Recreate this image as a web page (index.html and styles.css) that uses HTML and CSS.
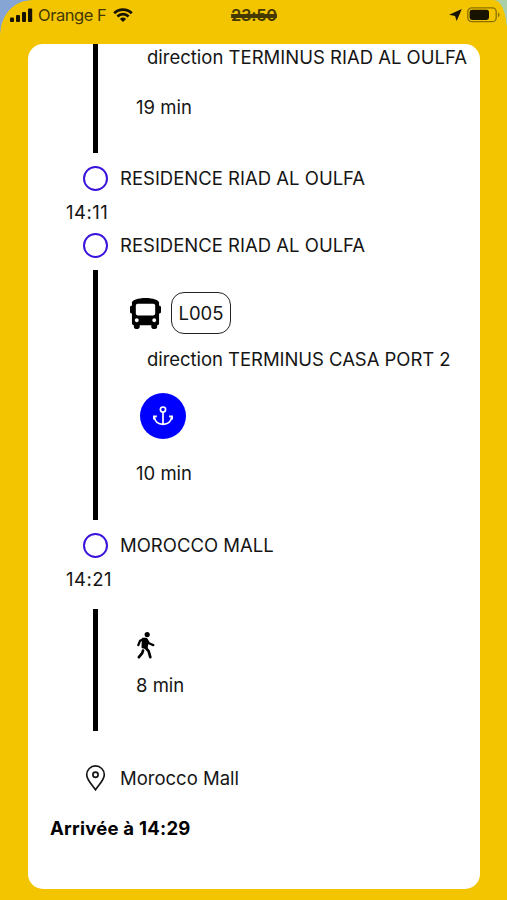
FILE: index.html
```
<!DOCTYPE html>
<html lang="fr">
<head>
  <meta charset="UTF-8">
  <meta name="viewport" content="width=device-width, initial-scale=1.0">
  <title>Itinéraire</title>
  <link rel="stylesheet" href="styles.css">
</head>
<body>
  <div class="screen">
    <header class="status-bar">
      <div class="status-left">
        <svg class="signal" width="23" height="15" viewBox="0 0 23 15">
          <rect x="0" y="9.5" width="4" height="4.5" rx="1"/>
          <rect x="6" y="7" width="4" height="7" rx="1"/>
          <rect x="12" y="4" width="4" height="10" rx="1"/>
          <rect x="18" y="0.5" width="4.2" height="13.5" rx="1"/>
        </svg>
        <span class="carrier">Orange F</span>
        <svg class="wifi" width="20" height="14" viewBox="0 0 20 14">
          <path d="M1.2 5.2a12.6 12.6 0 0 1 17.6 0M4.4 8.5a8 8 0 0 1 11.2 0" fill="none" stroke="#171300" stroke-width="2.8"/>
          <path d="M10 14l-3.1-3.1a4.5 4.5 0 0 1 6.2 0z"/>
        </svg>
      </div>
      <span class="clock">23:50</span>
      <div class="status-right">
        <svg width="13" height="12" viewBox="0 0 13 12"><path d="M12.800.1L7.700 12 6 6.900.1 5.800z"/></svg>
        <svg width="34" height="16" viewBox="0 0 34 16">
          <rect x=".8" y=".9" width="28.400" height="13.800" rx="4" fill="none" stroke="#8a7000" stroke-width="1.3"/>
          <rect x="2.600" y="2.700" width="19.400" height="10.200" rx="2.400"/>
          <path d="M31 5.500v4.600c2-.8 2-3.800 0-4.600z" fill="#8a7000"/>
        </svg>
      </div>
    </header>

    <main class="card">
      <section class="leg leg-first">
        <p class="direction">direction TERMINUS RIAD AL OULFA</p>
        <p class="duration">19 min</p>
      </section>

      <div class="stop"><span class="dot"></span><span class="stop-name">RESIDENCE RIAD AL OULFA</span></div>
      <p class="time">14:11</p>
      <div class="stop"><span class="dot"></span><span class="stop-name">RESIDENCE RIAD AL OULFA</span></div>

      <section class="leg leg-bus">
        <div class="line-info">
          <svg class="bus" width="31" height="31" viewBox="0 0 512 512">
            <path d="M488 128h-8V80c0-44.800-99.200-80-224-80S32 35.200 32 80v48h-8c-13.250 0-24 10.740-24 24v80c0 13.250 10.750 24 24 24h8v160c0 17.670 14.330 32 32 32v32c0 17.670 14.330 32 32 32h32c17.670 0 32-14.330 32-32v-32h192v32c0 17.670 14.330 32 32 32h32c17.670 0 32-14.330 32-32v-32h6.400c16 0 25.600-12.800 25.600-25.600V256h8c13.250 0 24-10.750 24-24v-80c0-13.260-10.750-24-24-24zM112 400c-17.670 0-32-14.330-32-32s14.330-32 32-32 32 14.330 32 32-14.330 32-32 32zm16-112c-17.670 0-32-14.330-32-32V128c0-17.670 14.330-32 32-32h256c17.670 0 32 14.330 32 32v128c0 17.670-14.330 32-32 32H128zm272 112c-17.670 0-32-14.330-32-32s14.330-32 32-32 32 14.330 32 32-14.330 32-32 32z"/>
          </svg>
          <span class="badge">L005</span>
        </div>
        <p class="direction">direction TERMINUS CASA PORT 2</p>
        <div class="anchor">
          <svg width="20" height="20" viewBox="0 0 20 20">
            <circle cx="10" cy="3.600" r="2.600"/>
            <path d="M10 6.200v12.200M.9 13.400V10.300h3M19.100 13.400V10.300h-3M1.200 10.700c.7 4.800 4.100 7.600 8.800 7.600s8.100-2.800 8.800-7.600"/>
          </svg>
        </div>
        <p class="duration">10 min</p>
      </section>

      <div class="stop"><span class="dot"></span><span class="stop-name">MOROCCO MALL</span></div>
      <p class="time">14:21</p>

      <section class="leg leg-walk">
        <svg class="walk" width="18" height="27" viewBox="0 0 18 27">
          <circle cx="10.200" cy="2.600" r="2.600"/>
          <path d="M5.600 6.600h3.600l1.600 3.200-.9 6.400-4.600-.7z" stroke-width="1.500"/>
          <path d="M6.500 7.200L3 8.800l-1.700 4.300M9.700 7.500l2.200 3.800 4.400 1.800" fill="none" stroke-width="2.300"/>
          <path d="M8 15l3.600 4.200 1.700 6M6 18.600l-.8 2.600-3.300 4" fill="none" stroke-width="2.700"/>
        </svg>
        <p class="duration">8 min</p>
      </section>

      <div class="stop arrival-stop">
        <svg class="pin" width="25" height="26" viewBox="0 0 25 26">
          <path d="M12.500 24.800C9.500 20.200 3.700 14.800 3.700 9.700a8.800 8.800 0 0 1 17.600 0c0 5.100-5.800 10.500-8.800 15.100z"/>
          <circle cx="12.500" cy="9.700" r="2.600"/>
        </svg>
        <span>Morocco Mall</span>
      </div>
      <p class="arrival">Arrivée à 14:29</p>
    </main>
  </div>
</body>
</html>
```
FILE: styles.css
```
* {
  box-sizing: border-box;
}
body {
  margin: 0;
  font-family: Inter, "Liberation Sans", sans-serif;
  font-size: 18.5px;
  color: #151515;
}
p {
  margin: 0;
  white-space: nowrap;
}
svg {
  display: block;
  flex-shrink: 0;
}
.screen {
  width: 507px;
  height: 900px;
  padding: 0 27px 11px 28px;
  display: flex;
  flex-direction: column;
  overflow: hidden;
  /* the map shows behind the rounded top corners */
  background:
    radial-gradient(ellipse 31px 34px at 31px 34px, #f2c500 98%, transparent 100%) 0 0 / 31px 34px no-repeat,
    radial-gradient(ellipse 12px 32px at 0 32px, #f2c500 97%, transparent 100%) 100% 0 / 12px 32px no-repeat,
    linear-gradient(#86a4d4, #86a4d4) 0 0 / 31px 34px no-repeat,
    linear-gradient(#a9cfa9, #a9cfa9) 100% 0 / 12px 32px no-repeat,
    #f2c500;
}

/* Status bar */
.status-bar {
  display: grid;
  grid-template-columns: 1fr auto 1fr;
  align-items: center;
  height: 30px;
  margin: 0 -21px 14px -18px;
  fill: #171300;
}
.status-left, .status-right {
  display: flex;
  align-items: center;
}
.carrier {
  margin: 0 7px 0 5px;
  font-size: 16.5px;
  letter-spacing: -0.45px;
  color: #453900;
}
.clock {
  margin-left: -3px;
  font-size: 16.5px;
  font-weight: 600;
  letter-spacing: -0.3px;
  color: #453900;
  text-decoration: line-through;
  text-decoration-color: #453900;
  text-decoration-thickness: 4px;
}
.status-right {
  justify-content: flex-end;
  gap: 5px;
}

/* Itinerary */
.card {
  flex: 1;
  background: #fff;
  border-radius: 15px;
  overflow: hidden;
}
.leg {
  margin-left: 65px;
  border-left: 5px solid #000;
}
.leg-first {
  height: 109px;
  margin-bottom: 9px;
  padding-top: 1px;
}
.leg-first .duration {
  margin-top: 26px;
}
.direction {
  margin-left: 49px;
  line-height: 24px;
}
.duration {
  margin-left: 38px;
  line-height: 24px;
}
.stop {
  display: flex;
  align-items: center;
  gap: 12px;
  height: 33px;
  margin-left: 55px;
}
.stop-name {
  padding-bottom: 2px;
}
.dot {
  width: 25px;
  height: 25px;
  border: 2.5px solid #3b13dc;
  border-radius: 50%;
}
.time {
  margin-left: 38px;
  line-height: 34px;
  letter-spacing: 0.45px;
}
.leg-bus {
  height: 250px;
  margin: 8px 0 9px 65px;
  padding-top: 22px;
}
.line-info {
  display: flex;
  align-items: center;
  gap: 10px;
  margin-left: 32px;
}
.badge {
  width: 60px;
  height: 42px;
  border: 1.5px solid #222;
  border-radius: 13px;
  line-height: 40px;
  text-align: center;
}
.leg-bus .direction {
  margin-top: 13px;
  letter-spacing: -0.05px;
}
.anchor {
  display: flex;
  align-items: center;
  justify-content: center;
  width: 46px;
  height: 46px;
  margin: 22px 0 22px 42px;
  border-radius: 50%;
  background: #0000ff;
}
.anchor svg {
  fill: none;
  stroke: #fff;
  stroke-width: 1.7;
}
.leg-walk {
  height: 122px;
  margin-top: 13px;
  padding-top: 23px;
}
.walk {
  margin-left: 39px;
  stroke: #000;
  stroke-linejoin: round;
  stroke-linecap: round;
}
.walk circle {
  stroke: none;
}
.leg-walk .duration {
  margin-top: 14px;
}
.arrival-stop {
  margin-top: 30px;
}
.pin {
  fill: none;
  stroke: #151515;
  stroke-width: 1.7;
}
.arrival {
  margin: 22px 0 0 22px;
  font-weight: 700;
  line-height: 24px;
  letter-spacing: 0.25px;
  color: #000;
}
```
